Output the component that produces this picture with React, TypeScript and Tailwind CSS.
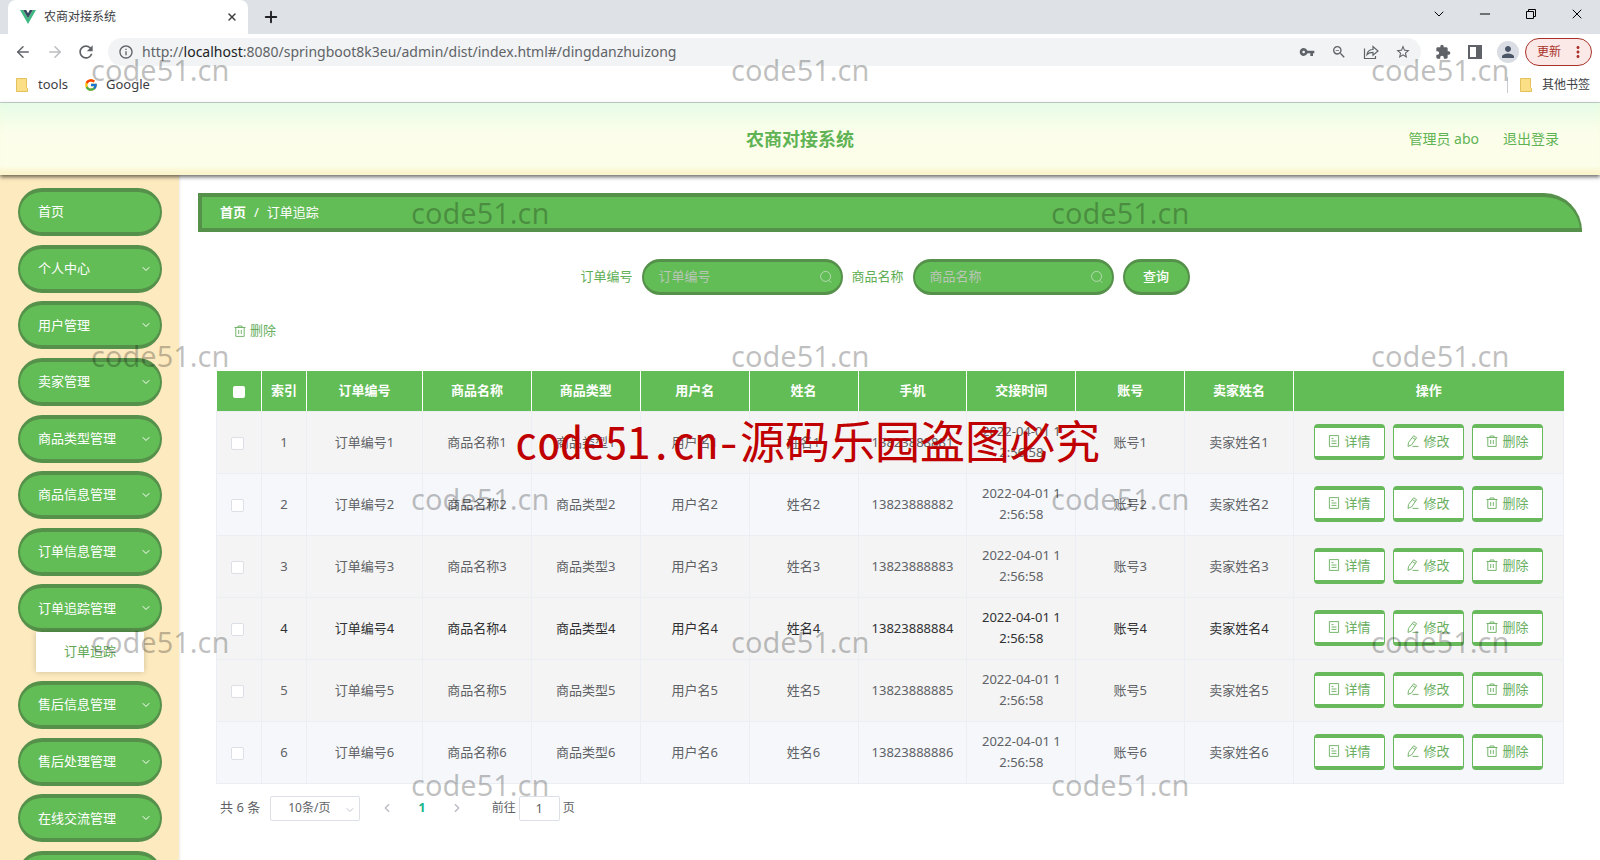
import { useState } from 'react';
import {
  ArrowLeft,
  ArrowRight,
  ChevronDown,
  ChevronLeft,
  ChevronRight,
  Minus,
  Plus,
  X,
} from 'lucide-react';
import {
  MdInfoOutline,
  MdOutlineZoomOut,
  MdPerson,
  MdRefresh,
  MdStarOutline,
  MdVpnKey,
  MdExtension,
  MdMoreVert,
} from 'react-icons/md';
import { FcGoogle } from 'react-icons/fc';

const menus = [
  { name: '首页' },
  { name: '个人中心', children: [] },
  { name: '用户管理', children: [] },
  { name: '卖家管理', children: [] },
  { name: '商品类型管理', children: [] },
  { name: '商品信息管理', children: [] },
  { name: '订单信息管理', children: [] },
  { name: '订单追踪管理', children: ['订单追踪'] },
  { name: '售后信息管理', children: [] },
  { name: '售后处理管理', children: [] },
  { name: '在线交流管理', children: [] },
  { name: '', children: [] },
];

const columns = ['订单编号', '商品名称', '商品类型', '用户名', '姓名', '手机', '交接时间', '账号', '卖家姓名'];

const rows = [1, 2, 3, 4, 5, 6].map((n) => ({
  id: n,
  cells: [
    `订单编号${n}`,
    `商品名称${n}`,
    `商品类型${n}`,
    `用户名${n}`,
    `姓名${n}`,
    `1382388888${n}`,
    '2022-04-01 12:56:58',
    `账号${n}`,
    `卖家姓名${n}`,
  ],
}));

function TrashIcon() {
  return (
    <svg viewBox="0 0 12 12" className="h-3 w-3 shrink-0" fill="none" stroke="currentColor" aria-hidden="true">
      <path d="M0.5 2.5h11M4 2.5v-1.5h4v1.5M1.8 2.5v8.9h8.4V2.5M4.7 5v4M7.3 5v4" strokeWidth="0.9" />
    </svg>
  );
}

function DocIcon() {
  return (
    <svg viewBox="0 0 12 12" className="h-3 w-3 shrink-0" fill="none" stroke="currentColor" aria-hidden="true">
      <path d="M1.4 0.6h9.2v10.8H1.4zM3.5 3.6h2M3.5 6h5M3.5 8.4h5" strokeWidth="0.9" />
    </svg>
  );
}

function EditIcon() {
  return (
    <svg viewBox="0 0 12 12" className="h-3 w-3 shrink-0" fill="none" stroke="currentColor" aria-hidden="true">
      <path d="M6.6 0.8l3 1.8-4.900 7.200-3.700 1.600.5-4zM5.400 2.700l3 1.800M5.500 11.400h6" strokeWidth="0.9" strokeLinejoin="round" />
    </svg>
  );
}

function SearchIcon() {
  return (
    <svg viewBox="0 0 14 14" className="h-3.5 w-3.5 shrink-0 text-[#b5dab0]" fill="none" stroke="currentColor" aria-hidden="true">
      <circle cx="6.6" cy="6.4" r="5" />
      <path d="M10 10.4l2.2 2.2" />
    </svg>
  );
}

function FolderIcon() {
  return (
    <svg viewBox="0 0 12 14" className="h-3.5 w-3 shrink-0" aria-hidden="true">
      <path d="M0.5 0.5h10v9l1 1v3h-11z" fill="#fbdf86" stroke="#e3c05c" />
    </svg>
  );
}

function BrowserChrome() {
  return (
    <div className="border-b border-[#c9d3cc] bg-white text-[#3c4043]">
      <div className="flex h-[34px] items-center bg-[#dee1e6] pl-2">
        <div className="flex h-full w-60 items-center rounded-t-lg bg-white pr-2.5 pl-3">
          <svg viewBox="0 0 16 14" className="h-3.5 w-4" aria-hidden="true">
            <path d="M0 0h3.2L8 8.3 12.8 0H16L8 14z" fill="#41b883" />
            <path d="M3.2 0h3L8 3.2 9.8 0h3L8 8.3z" fill="#35495e" />
          </svg>
          <span className="ml-2 flex-1 text-xs">农商对接系统</span>
          <button type="button" aria-label="关闭标签页">
            <X className="h-3 w-3" strokeWidth={3} />
          </button>
        </div>
        <button type="button" aria-label="新标签页" className="ml-3.5">
          <Plus className="h-[18px] w-[18px] text-[#202124]" strokeWidth={2.5} />
        </button>
        <div className="ml-auto flex items-center gap-[30px] pr-[15px] pb-1.5 text-black">
          <ChevronDown className="h-4 w-4" strokeWidth={1.5} />
          <Minus className="h-4 w-4" strokeWidth={1.5} />
          <svg viewBox="0 0 16 16" className="h-4 w-4" fill="none" stroke="currentColor" aria-hidden="true">
            <path d="M3.5 5.5h7v7h-7zM5.5 5.5v-2h7v7h-2" />
          </svg>
          <X className="h-4 w-4" strokeWidth={1.5} />
        </div>
      </div>
      <div className="flex h-9 items-center pr-2 pl-3.5 text-[#5f6368]">
        <ArrowLeft className="h-[18px] w-[18px]" />
        <ArrowRight className="ml-3.5 h-[18px] w-[18px] text-[#bbbdbf]" />
        <MdRefresh className="ml-3 h-5 w-5" />
        <div className="ml-3 flex h-7 flex-1 items-center rounded-full bg-[#f1f3f4] pr-2.5 pl-2.5">
          <MdInfoOutline className="h-4 w-4" />
          <span className="ml-2 flex-1 text-sm">
            http://<span className="text-[#202124]">localhost</span>:8080/springboot8k3eu/admin/dist/index.html#/dingdanzhuizong
          </span>
          <div className="flex items-center gap-4">
            <MdVpnKey className="h-4 w-4" />
            <MdOutlineZoomOut className="h-4 w-4" />
            <svg viewBox="0 0 16 16" className="h-4 w-4" fill="none" stroke="currentColor" strokeWidth="1.2" aria-hidden="true">
              <path d="M1.500 4.500v10h11V12M4 10.500c.6-3.600 2.800-5 6-5V2.500l5 4.500-5 4.200V8.300C7.500 8.300 5.500 8.800 4 10.500z" />
            </svg>
            <MdStarOutline className="h-4 w-4" />
          </div>
        </div>
        <MdExtension className="ml-3.5 h-4 w-4" />
        <svg viewBox="0 0 16 16" className="ml-4 h-4 w-4" aria-hidden="true">
          <path d="M1 1h14v14H1zM3 3v10h6V3z" fill="currentColor" fillRule="evenodd" />
        </svg>
        <span className="ml-3.5 flex h-[22px] w-[22px] items-center justify-center rounded-full bg-[#dadde3]">
          <MdPerson className="h-[18px] w-[18px] text-[#4a5568]" />
        </span>
        <button type="button" className="ml-1.5 flex h-7 items-center rounded-full border border-[#a8322a] bg-[#fbe9e7] pr-1 pl-[11px] text-xs text-[#a8322a]">
          更新
          <MdMoreVert className="ml-2 h-[18px] w-[18px]" />
        </button>
      </div>
      <div className="flex h-8 items-center pr-2.5 pb-0.5 pl-4 text-xs">
        <a href="#tools" className="flex items-center gap-2.5">
          <FolderIcon />
          <span className="text-[13px]">tools</span>
        </a>
        <a href="#google" className="ml-4 flex items-center gap-2">
          <FcGoogle className="h-3.5 w-3.5" />
          <span className="text-[13px]">Google</span>
        </a>
        <a href="#other" className="ml-auto flex items-center gap-2.5 border-l border-[#c8cbd0] pl-3">
          <FolderIcon />
          <span>其他书签</span>
        </a>
      </div>
    </div>
  );
}

function Sidebar() {
  return (
    <nav className="w-[179px] shrink-0 bg-[#fdeabf] px-[18px] pt-[13px] shadow-[1px_0_2px_rgba(0,0,0,0.08)]">
      <ul className="w-36">
        {menus.map((menu, i) => (
          <li key={i} className="mb-[6%]">
            <button
              type="button"
              className="flex h-12 w-full items-center justify-between rounded-[24px] border-x-2 border-y-4 border-[#55914a] bg-[#63bd56] pr-2 pl-[18px] text-[13px] text-white"
            >
              {menu.name}
              {menu.children && <ChevronDown className="h-3 w-3" />}
            </button>
            {menu.children?.map((child) => (
              <a
                key={child}
                href="#/dingdanzhuizong"
                className="mx-[18px] flex h-10 items-center justify-center bg-white pb-0.5 text-[13px] text-[#5fa754] shadow-[0_0_6px_rgba(0,0,0,0.2)]"
              >
                {child}
              </a>
            ))}
          </li>
        ))}
      </ul>
    </nav>
  );
}

function SearchField({ id, label }: { id: string; label: string }) {
  return (
    <div className="flex items-center gap-[9px]">
      <label htmlFor={id} className="text-[13px] text-[#5fae54]">{label}</label>
      <div className="flex h-9 w-[201px] items-center rounded-[18px] border-x-2 border-y-3 border-[#55914a] bg-[#63bd56] pr-2 pl-[15px]">
        <input
          id={id}
          type="text"
          placeholder={label}
          className="min-w-0 flex-1 bg-transparent text-[13px] text-white outline-none placeholder:text-[#b9c6b6]"
        />
        <SearchIcon />
      </div>
    </div>
  );
}

const actionClass =
  'flex h-9 w-[71px] items-center justify-center gap-1 rounded border-x border-y-4 border-[#68b95c] bg-white pb-0.5 text-[13px] text-[#68ae5e]';

function OrderTable() {
  const [selected, setSelected] = useState<number[]>([]);
  const toggle = (id: number) => {
    setSelected(selected.includes(id) ? selected.filter((s) => s !== id) : [...selected, id]);
  };

  return (
    <table className="w-full table-fixed border-collapse text-center text-[13px] leading-[21px]">
      <thead>
        <tr className="h-10 bg-[#63bd56] text-white">
          <th className="w-[45px] border-r border-white">
            <input
              type="checkbox"
              aria-label="全选"
              checked={selected.length === rows.length}
              onChange={(e) => setSelected(e.target.checked ? rows.map((r) => r.id) : [])}
              className="h-3 w-3 appearance-none rounded-xs bg-white align-middle checked:bg-[#409eff]"
            />
          </th>
          <th className="w-[45px] border-r border-white">索引</th>
          {columns.map((column, i) => (
            <th key={column} className={`border-r border-white ${i === 0 ? 'w-[116px]' : ''}`}>{column}</th>
          ))}
          <th className="w-[270px]">操作</th>
        </tr>
      </thead>
      <tbody>
        {rows.map((row) => (
          <tr
            key={row.id}
            className={`h-[62px] ${row.id % 2 === 0 && row.id !== 4 ? 'bg-[#f5f7fb]' : 'bg-[#f4f4f4]'} ${row.id === 4 ? 'text-[#303133]' : 'text-[#606266]'}`}
          >
            <td className="border border-[#ebeef2]">
              <input
                type="checkbox"
                aria-label={`选择订单编号${row.id}`}
                checked={selected.includes(row.id)}
                onChange={() => toggle(row.id)}
                className="mr-1 h-[13px] w-[13px] appearance-none rounded-xs border border-[#dcdfe6] bg-white align-middle checked:bg-[#409eff]"
              />
            </td>
            <td className="border border-[#ebeef2]">{row.id}</td>
            {row.cells.map((cell, i) => (
              <td key={columns[i]} className="border border-[#ebeef2] px-3 break-all">{cell}</td>
            ))}
            <td className="border border-[#ebeef2]">
              <div className="flex justify-center gap-2">
                <button type="button" className={actionClass}><DocIcon />详情</button>
                <button type="button" className={actionClass}><EditIcon />修改</button>
                <button type="button" className={actionClass}><TrashIcon />删除</button>
              </div>
            </td>
          </tr>
        ))}
      </tbody>
    </table>
  );
}

function Pagination() {
  return (
    <div className="mt-3 flex h-[25px] items-center pl-1 text-[13px] text-[#606266]">
      <span>共 6 条</span>
      <div className="relative ml-2.5">
        <select
          aria-label="每页条数"
          className="h-[25px] w-[90px] appearance-none rounded-xs border border-[#dcdfe6] bg-white pl-[17px] text-xs"
        >
          <option>10条/页</option>
        </select>
        <ChevronDown className="pointer-events-none absolute top-2 right-1 h-3 w-3 text-[#c0c4cc]" />
      </div>
      <button type="button" aria-label="上一页" className="ml-5 text-[#b4b8bf]"><ChevronLeft className="h-3.5 w-3.5" /></button>
      <button type="button" className="mx-6 font-bold text-[#1fb58f]">1</button>
      <button type="button" aria-label="下一页" className="text-[#b4b8bf]"><ChevronRight className="h-3.5 w-3.5" /></button>
      <label htmlFor="page" className="ml-7 text-xs">前往</label>
      <input
        id="page"
        type="text"
        defaultValue="1"
        className="mx-[3px] h-[25px] w-[41px] rounded-xs border border-[#dcdfe6] bg-white text-center"
      />
      <span className="text-xs">页</span>
    </div>
  );
}

// Odd lines carry three marks, even lines are shifted and carry two
const watermarkLines = [3, 2, 3, 2, 3, 2];

function Watermark() {
  return (
    <div className="pointer-events-none absolute inset-0 z-10 overflow-hidden pt-[49px] text-[29px] leading-[42px] text-black/25" aria-hidden="true">
      {watermarkLines.map((count, line) => (
        <div key={line} className={`mb-[101px] flex ${count === 3 ? 'pl-[91px]' : 'pl-[411px]'}`}>
          {Array.from({ length: count }, (_, i) => (
            <span key={i} className={i < count - 1 ? 'w-[640px] shrink-0' : ''}>code51.cn</span>
          ))}
        </div>
      ))}
    </div>
  );
}

export default function App() {
  return (
    <div className="relative h-screen overflow-hidden bg-white font-['Noto_Sans','Noto_Sans_CJK_SC',sans-serif]">
      <BrowserChrome />
      <header className="relative z-10 grid h-[72px] grid-cols-3 items-center bg-linear-to-b from-[#e6fce6] via-[#fbfeea] via-40% to-[#fdfeea] px-[41px] text-[#5fb354] shadow-[0_2px_4px_rgba(0,0,0,0.6),inset_0_-8px_4px_-2px_#fbf5cd]">
        <h1 className="col-start-2 text-center text-lg font-bold">农商对接系统</h1>
        <div className="flex justify-end gap-6 text-sm">
          <span>管理员 abo</span>
          <a href="#logout">退出登录</a>
        </div>
      </header>
      <div className="flex">
        <Sidebar />
        <main className="min-w-0 flex-1 pt-[18px] pr-[18px] pl-[19px]">
          <div className="flex h-[39px] items-center gap-2 rounded-tr-[38px] border-4 border-r-2 border-[#55914a] bg-[#63bd56] pl-[18px] text-[13px] text-white">
            <a href="#/" className="font-bold">首页</a>
            <span>/</span>
            <span>订单追踪</span>
          </div>
          <div className="px-[18px]">
            <form className="mt-[27px] flex justify-center gap-[9px] pr-2.5" onSubmit={(e) => e.preventDefault()}>
              <SearchField id="orderNo" label="订单编号" />
              <SearchField id="goodsName" label="商品名称" />
              <button
                type="submit"
                className="h-9 w-[67px] rounded-[18px] border-x-2 border-y-3 border-[#55914a] bg-[#63bd56] text-[13px] font-medium text-white"
              >
                查询
              </button>
            </form>
            <button type="button" className="mt-[26px] mb-[30px] ml-[18px] flex h-5 items-center gap-1 text-[13px] text-[#68ae5e]">
              <TrashIcon />
              删除
            </button>
            <OrderTable />
            <Pagination />
          </div>
        </main>
      </div>
      <Watermark />
      <div className="pointer-events-none absolute top-[408px] left-[515px] z-20 font-['Noto_Sans_Mono_CJK_SC','Noto_Sans_CJK_SC',monospace] text-[45px] leading-[64px] whitespace-nowrap text-[#c00000]" aria-hidden="true">
        code51.cn-源码乐园盗图必究
      </div>
    </div>
  );
}
